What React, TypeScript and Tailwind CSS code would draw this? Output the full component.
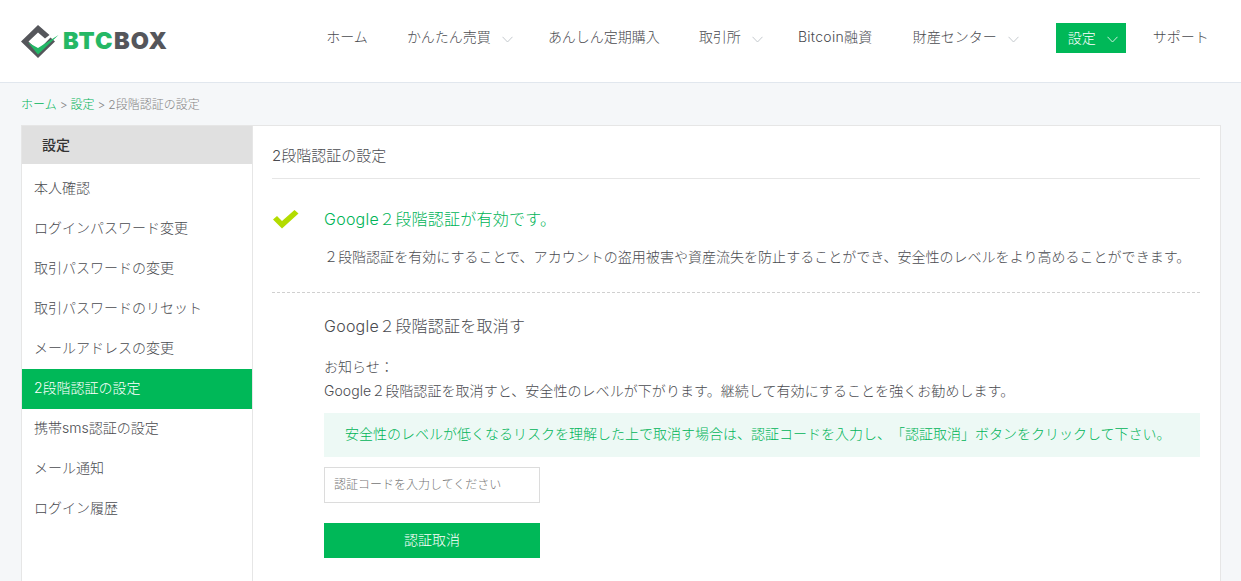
import React from "react";

const font = { fontFamily: 'Inter, "Noto Sans CJK JP", "Liberation Sans", sans-serif' };

const Chevron = ({ className }: { className: string }) => (
  <svg width="11" height="7" viewBox="0 0 11 7" fill="none" className={className}>
    <path d="M0.5 0.8L5.5 6L10.5 0.8" stroke="currentColor" strokeWidth="1" />
  </svg>
);

const Logo = () => (
  <div className="flex items-center">
    <svg width="38" height="34" viewBox="0 0 38 34" className="shrink-0 mt-[1px]">
      <path d="M17 0L0 16.5L17 33L34 16.5L29.5 12.5L17 25.5L7.5 16.5L17 7.5L24 13.5L28.5 10Z" fill="#55565b" />
      <path d="M7 17.5L17 23L37.5 10L17 29.5Z" fill="#22b866" />
    </svg>
    <span className="ml-[4px] text-[23.5px] leading-none font-black tracking-[1.2px]">
      <span className="text-[#25b865]">BTC</span>
      <span className="text-[#55565b]">BOX</span>
    </span>
  </div>
);

const NavItem = ({ label, chevron, className = "" }: { label: string; chevron?: boolean; className?: string }) => (
  <div className={`flex items-center text-[14px] text-[#4a4b50] ${className}`}>
    <span className="pb-[3px]">{label}</span>
    {chevron && <Chevron className="ml-[11px] mt-[3px] text-[#c4c9cd]" />}
  </div>
);

const sideItems = [
  "本人確認",
  "ログインパスワード変更",
  "取引パスワードの変更",
  "取引パスワードのリセット",
  "メールアドレスの変更",
  "2段階認証の設定",
  "携帯sms認証の設定",
  "メール通知",
  "ログイン履歴",
];

export default function App() {
  return (
    <div style={font} className="h-[581px] overflow-hidden bg-[#f5f7f9] font-light [text-spacing-trim:space-all]">
      <header className="h-[83px] bg-white border-b border-[#e1e7ee] flex items-center pl-[21px]">
        <Logo />
        <nav className="flex items-center ml-[158px] mb-[6px]">
          <NavItem label="ホーム" />
          <NavItem label="かんたん売買" chevron className="ml-[39px]" />
          <NavItem label="あんしん定期購入" className="ml-[35px]" />
          <NavItem label="取引所" chevron className="ml-[39px]" />
          <NavItem label="Bitcoin融資" className="ml-[35px] tracking-[0.3px]" />
          <NavItem label="財産センター" chevron className="ml-[40px]" />
          <div className="ml-[37px] w-[70px] h-[30px] bg-[#00b858] text-white text-[14px] flex items-center pl-[12px]">
            <span className="pb-[2px]">設定</span>
            <Chevron className="ml-[11px] mt-[3px] text-[#cdeedd]" />
          </div>
          <NavItem label="サポート" className="ml-[27px]" />
        </nav>
      </header>

      <div className="h-[42px] pl-[21px] pt-[2px] flex items-center text-[12px] text-[#858585]">
        <span className="text-[#00b458]">ホーム</span>
        <span className="mx-[3px]">&gt;</span>
        <span className="text-[#00b458]">設定</span>
        <span className="mx-[3px]">&gt;</span>
        <span>2段階認証の設定</span>
      </div>

      <div className="ml-[21px] mr-[20px] h-[500px] bg-white border border-[#e6e6e6] flex">
        <aside className="w-[231px] shrink-0 border-r border-[#e6e6e6]">
          <div className="h-[38px] bg-[#e0e0e0] pl-[20px] pb-[2px] flex items-center text-[14px] font-medium text-[#333]">設定</div>
          <ul className="mt-[5px]">
            {sideItems.map((item) => (
              <li
                key={item}
                className={
                  item === "2段階認証の設定"
                    ? "h-[40px] flex items-center pl-[12px] pb-[3px] text-[14px] bg-[#00b858] text-white"
                    : "h-[40px] flex items-center pl-[12px] pb-[3px] text-[14px] text-[#4a4b50]"
                }
              >
                {item}
              </li>
            ))}
          </ul>
        </aside>

        <main className="flex-1 pl-[19px] pr-[20px]">
          <div className="h-[53px] border-b border-[#e6e6e6] flex items-center text-[15px] text-[#4a4b50] pt-[8px]">2段階認証の設定</div>
          <div className="h-[114px] border-b border-dashed border-[#d0d0d0] flex">
            <svg width="28" height="22" viewBox="0 0 28 22" className="mt-[30px] shrink-0">
              <path d="M1 10.5L5 7L10 12L22.5 1L26.5 4.5L10 19.5Z" fill="#b3dc00" />
            </svg>
            <div className="ml-[24px] pt-[27px]">
              <p className="text-[16px] leading-[26px] text-[#00b458] tracking-[0.25px]">Google２段階認証が有効です。</p>
              <p className="mt-[13px] text-[14px] leading-[24px] text-[#4a4b50] tracking-[0.03px]">２段階認証を有効にすることで、アカウントの盗用被害や資産流失を防止することができ、安全性のレベルをより高めることができます。</p>
            </div>
          </div>
          <div className="pl-[52px]">
            <p className="mt-[20px] text-[16px] leading-[26px] text-[#4a4b50] tracking-[0.25px]">Google２段階認証を取消す</p>
            <p className="mt-[16px] text-[14px] leading-[24px] text-[#4a4b50]">お知らせ：</p>
            <p className="text-[14px] leading-[24px] text-[#4a4b50] tracking-[0.06px]">Google２段階認証を取消すと、安全性のレベルが下がります。継続して有効にすることを強くお勧めします。</p>
            <div className="mt-[10px] h-[44px] bg-[#edf9f5] pl-[21px] pb-[3px] flex items-center text-[14px] text-[#00b458]">
              安全性のレベルが低くなるリスクを理解した上で取消す場合は、認証コードを入力し、「認証取消」ボタンをクリックして下さい。
            </div>
            <input
              placeholder="認証コードを入力してください"
              className="mt-[10px] block w-[216px] h-[36px] border border-[#dcdcdc] px-[9px] pb-[2px] text-[12px] placeholder:text-[#757575] outline-none"
            />
            <button className="mt-[20px] block w-[216px] h-[35px] bg-[#00b858] text-white text-[14px] pb-[3px]">認証取消</button>
          </div>
        </main>
      </div>
    </div>
  );
}
